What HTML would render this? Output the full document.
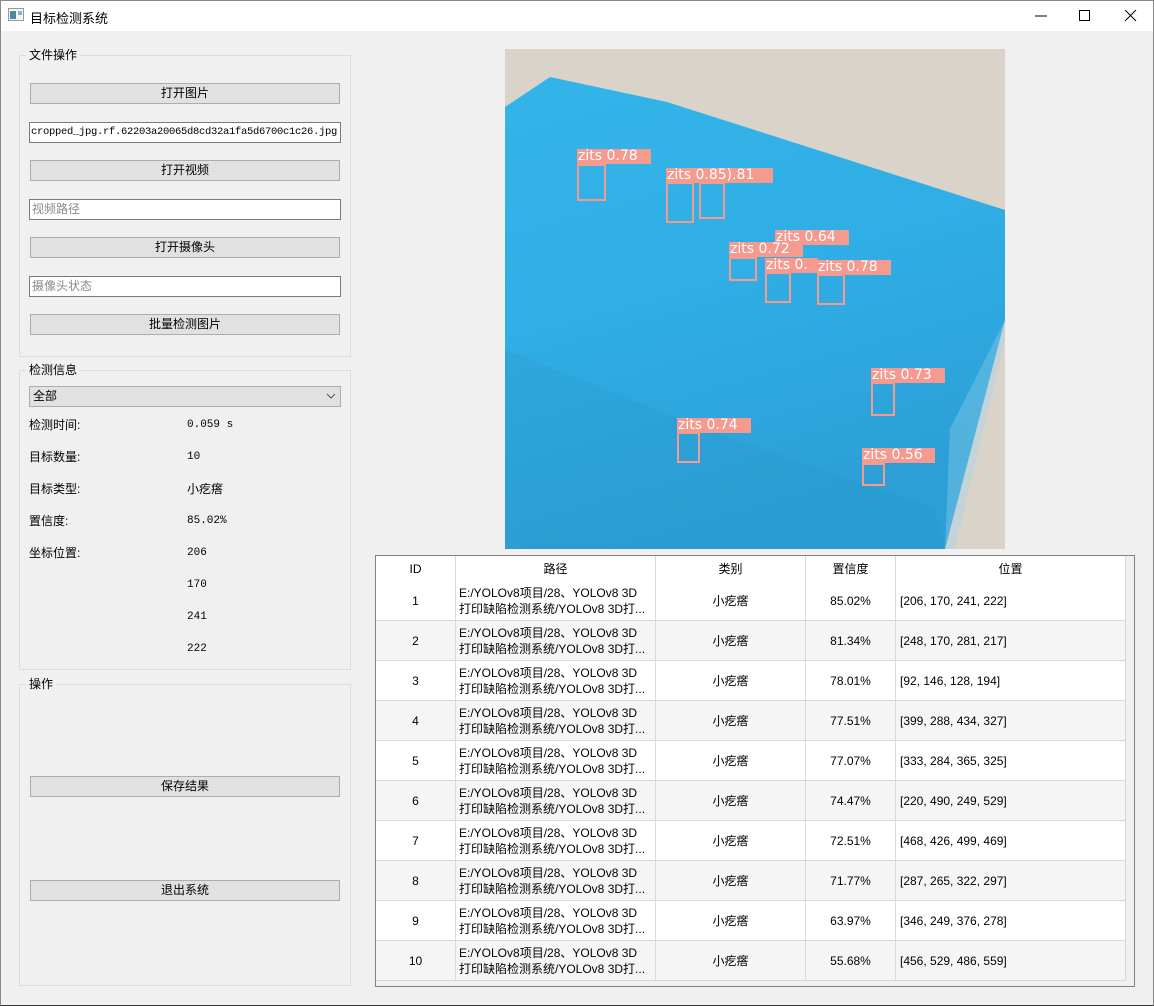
<!DOCTYPE html>
<html><head><meta charset="utf-8"><style>
*{box-sizing:border-box;margin:0;padding:0}
body{width:1154px;height:1006px;background:#f0f0f0;font-family:"Liberation Sans","Noto Sans CJK SC",sans-serif;font-size:12px;color:#000;position:relative;overflow:hidden}
.a{position:absolute}
.win{left:0;top:0;width:1154px;height:1006px;border:1px solid #888;border-bottom:1px solid #333}
.title{left:1px;top:1px;width:1152px;height:30px;background:#fff}
.grp{border:1px solid #dcdcdc}
.gl{background:#f0f0f0;padding:0 3px;font-size:12px;line-height:14px}
.btn{background:#e1e1e1;border:1px solid #adadad;height:21px;text-align:center;line-height:19px;font-size:12px}
.inp{background:#fff;border:1px solid #7a7a7a;height:21px;line-height:19px;padding-left:2px;font-size:12px}
.ph{color:#8a8a8a}
.mono{font-family:"Liberation Mono","Noto Sans CJK SC",monospace}
.lbl{font-size:12px;line-height:14px}
.tbl{left:375px;top:555px;width:760px;height:432px;border:1px solid #828282;background:#f0f0f0}
.cell{position:absolute;border-right:1px solid #d8d8d8;border-bottom:1px solid #d8d8d8;font-size:12px;display:flex;align-items:center}
.c{justify-content:center}
.box{position:absolute;border:2px solid #f59a8e}
.tag{position:absolute;background:#f59a8e;color:#fff;font-family:"DejaVu Sans",sans-serif;font-size:14px;line-height:15px;height:15px;white-space:nowrap;overflow:hidden;padding-left:1px}
</style></head><body>
<div class="a win"></div>
<div class="a title"></div>
<svg class="a" style="left:8px;top:8px" width="16" height="14"><rect x="0.5" y="0.5" width="15" height="12" fill="#f4f4f4" stroke="#999"/><rect x="2" y="3" width="6" height="8" fill="#4a8a9a"/><rect x="10" y="3" width="4" height="4" fill="#8fb0c8"/></svg>
<div class="a" style="left:30px;top:8px;font-size:13px">目标检测系统</div>
<svg class="a" style="left:1030px;top:8px" width="110" height="16"><line x1="5" y1="8" x2="17" y2="8" stroke="#000"/><rect x="49.5" y="2.5" width="10" height="10" fill="none" stroke="#000"/><line x1="95" y1="2" x2="106" y2="13" stroke="#000"/><line x1="106" y1="2" x2="95" y2="13" stroke="#000"/></svg>

<div class="a grp" style="left:19px;top:55px;width:332px;height:302px"></div>
<div class="a gl" style="left:26px;top:48px">文件操作</div>
<div class="a btn" style="left:30px;top:83px;width:310px">打开图片</div>
<div class="a inp mono" style="left:29px;top:122px;width:312px;font-size:10.5px;white-space:nowrap;overflow:hidden;letter-spacing:-0.3px;padding-left:1px">cropped_jpg.rf.62203a20065d8cd32a1fa5d6700c1c26.jpg</div>
<div class="a btn" style="left:30px;top:160px;width:310px">打开视频</div>
<div class="a inp ph" style="left:29px;top:199px;width:312px">视频路径</div>
<div class="a btn" style="left:30px;top:237px;width:310px">打开摄像头</div>
<div class="a inp ph" style="left:29px;top:276px;width:312px">摄像头状态</div>
<div class="a btn" style="left:30px;top:314px;width:310px">批量检测图片</div>

<div class="a grp" style="left:19px;top:370px;width:332px;height:300px"></div>
<div class="a gl" style="left:26px;top:363px">检测信息</div>
<div class="a btn" style="left:29px;top:386px;width:312px;text-align:left;padding-left:3px">全部</div>
<svg class="a" style="left:326px;top:392px" width="10" height="8"><polyline points="1,2 5,6 9,2" fill="none" stroke="#555"/></svg>
<div class="a lbl" style="left:29px;top:418px">检测时间:</div><div class="a lbl mono" style="left:187px;top:418px;font-size:11px">0.059 s</div>
<div class="a lbl" style="left:29px;top:450px">目标数量:</div><div class="a lbl mono" style="left:187px;top:450px;font-size:11px">10</div>
<div class="a lbl" style="left:29px;top:482px">目标类型:</div><div class="a lbl" style="left:187px;top:482px">小疙瘩</div>
<div class="a lbl" style="left:29px;top:514px">置信度:</div><div class="a lbl mono" style="left:187px;top:514px;font-size:11px">85.02%</div>
<div class="a lbl" style="left:29px;top:546px">坐标位置:</div><div class="a lbl mono" style="left:187px;top:546px;font-size:11px">206</div>
<div class="a lbl mono" style="left:187px;top:578px;font-size:11px">170</div>
<div class="a lbl mono" style="left:187px;top:610px;font-size:11px">241</div>
<div class="a lbl mono" style="left:187px;top:642px;font-size:11px">222</div>

<div class="a grp" style="left:19px;top:684px;width:332px;height:302px"></div>
<div class="a gl" style="left:26px;top:677px">操作</div>
<div class="a btn" style="left:30px;top:776px;width:310px">保存结果</div>
<div class="a btn" style="left:30px;top:880px;width:310px">退出系统</div>

<svg class="a" style="left:505px;top:49px" width="500" height="500">
<defs><linearGradient id="g" x1="0" y1="0" x2="0.3" y2="1"><stop offset="0" stop-color="#33b5e8"/><stop offset="0.5" stop-color="#30aee6"/><stop offset="1" stop-color="#2c9fd6"/></linearGradient></defs>
<rect width="500" height="500" fill="#d9d3ca"/>
<polygon points="0,58 45,28 162,53 328,106 500,161 500,271 440,500 0,500" fill="url(#g)"/>
<polygon points="0,300 200,380 430,460 440,500 0,500" fill="#2a8fc0" opacity="0.2"/>
<polygon points="445,380 500,271 500,290 450,500 440,500" fill="#9fd4ea" opacity="0.35"/>
</svg>
<div class="box" style="left:577px;top:164px;width:29px;height:37px"></div>
<div class="tag" style="left:577px;top:149px;width:74px">zits 0.78</div>
<div class="box" style="left:666px;top:182px;width:28px;height:41px"></div>
<div class="box" style="left:699px;top:182px;width:26px;height:37px"></div>
<div class="tag" style="left:666px;top:168px;width:107px">zits 0.85).81</div>
<div class="tag" style="left:775px;top:230px;width:74px">zits 0.64</div>
<div class="box" style="left:729px;top:257px;width:28px;height:24px"></div>
<div class="tag" style="left:729px;top:242px;width:74px">zits 0.72</div>
<div class="box" style="left:765px;top:272px;width:26px;height:31px"></div>
<div class="tag" style="left:765px;top:258px;width:53px">zits 0.</div>
<div class="box" style="left:817px;top:274px;width:28px;height:31px"></div>
<div class="tag" style="left:817px;top:260px;width:74px">zits 0.78</div>
<div class="box" style="left:871px;top:382px;width:24px;height:34px"></div>
<div class="tag" style="left:871px;top:368px;width:74px">zits 0.73</div>
<div class="box" style="left:677px;top:432px;width:23px;height:31px"></div>
<div class="tag" style="left:677px;top:418px;width:74px">zits 0.74</div>
<div class="box" style="left:862px;top:463px;width:23px;height:23px"></div>
<div class="tag" style="left:862px;top:448px;width:73px">zits 0.56</div>

<div class="a tbl">
<div style="position:absolute;left:0;top:0;width:750px;height:425px;background:#fff"></div>
<div id="t"></div>
</div>
<script>
var cols=[[0,80],[80,200],[280,150],[430,90],[520,230]];
var hd=["ID","路径","类别","置信度","位置"];
var data=[["85.02%","[206, 170, 241, 222]"],["81.34%","[248, 170, 281, 217]"],["78.01%","[92, 146, 128, 194]"],["77.51%","[399, 288, 434, 327]"],["77.07%","[333, 284, 365, 325]"],["74.47%","[220, 490, 249, 529]"],["72.51%","[468, 426, 499, 469]"],["71.77%","[287, 265, 322, 297]"],["63.97%","[346, 249, 376, 278]"],["55.68%","[456, 529, 486, 559]"]];
var h="";
for(var i=0;i<5;i++){h+='<div class="cell c" style="left:'+cols[i][0]+'px;top:0;width:'+cols[i][1]+'px;height:25px;background:#fff;border-bottom:none">'+hd[i]+'</div>';}
for(var r=0;r<10;r++){var y=25+r*40,bg=r%2?"#f5f5f5":"#fff";
var vals=[r+1,'<div style="line-height:16px;padding-left:3px;white-space:nowrap">E:/YOLOv8项目/28、YOLOv8 3D<br>打印缺陷检测系统/YOLOv8 3D打...</div>',"小疙瘩",data[r][0],data[r][1]];
for(var i=0;i<5;i++){var al=(i==1||i==4)?'':' c';h+='<div class="cell'+al+'" style="left:'+cols[i][0]+'px;top:'+y+'px;width:'+cols[i][1]+'px;height:40px;background:'+bg+';'+(i==4?'padding-left:4px;':'')+'">'+vals[i]+'</div>';}}
document.getElementById("t").innerHTML=h;
</script>
</body></html>
